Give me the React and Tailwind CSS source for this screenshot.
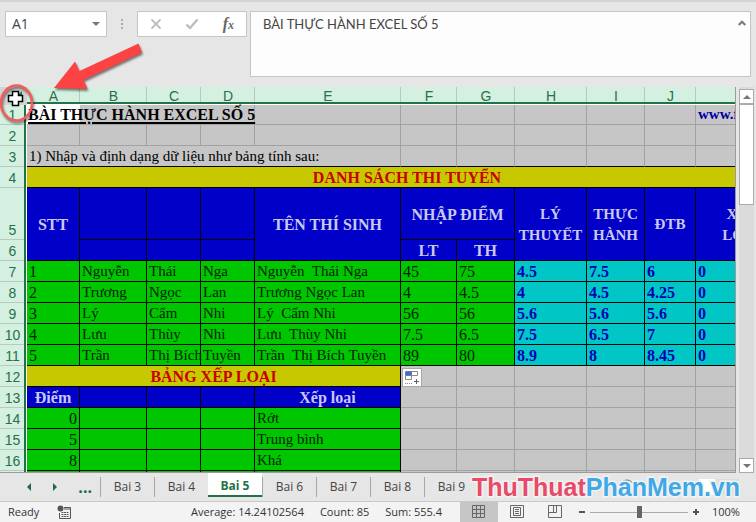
import React from 'react';
import clsx from 'clsx';

const UI_FONT = "font-['Open_Sans','Noto_Sans',sans-serif]";

const tones = {
  plain: 'bg-[#c6c6c6] border-[#a2a2a2] text-[15px] text-black',
  title: 'bg-[#c8c800] border-black text-[#c80000] font-bold text-center',
  head: 'bg-[#0000c8] border-black text-[#c9c9f2] font-bold text-center',
  name: 'bg-[#00c600] border-black text-[15px] text-[#002200]',
  mark: 'bg-[#00c600] border-black text-[#002200]',
  cyan: 'bg-[#00c6c6] border-black text-[#0000b4] font-bold',
};

const columns = [
  ['A', 'w-[53px]'],
  ['B', 'w-[67px]'],
  ['C', 'w-[54px]'],
  ['D', 'w-[54px]'],
  ['E', 'w-[146px]'],
  ['F', 'w-[56px]'],
  ['G', 'w-[58px]'],
  ['H', 'w-[72px]'],
  ['I', 'w-[58px]'],
  ['J', 'w-[51px]'],
  ['K', 'w-[92px]'],
];

const rowTones = ['mark', 'name', 'name', 'name', 'name', 'mark', 'mark', 'cyan', 'cyan', 'cyan', 'cyan'];

const students = [
  ['1', 'Nguyễn', 'Thái', 'Nga', 'Nguyễn  Thái Nga', '45', '75', '4.5', '7.5', '6', '0'],
  ['2', 'Trương', 'Ngọc', 'Lan', 'Trương Ngọc Lan', '4', '4.5', '4', '4.5', '4.25', '0'],
  ['3', 'Lý', 'Cẩm', 'Nhi', 'Lý  Cẩm Nhi', '56', '56', '5.6', '5.6', '5.6', '0'],
  ['4', 'Lưu', 'Thùy', 'Nhi', 'Lưu  Thùy Nhi', '7.5', '6.5', '7.5', '6.5', '7', '0'],
  ['5', 'Trần', 'Thị Bích', 'Tuyền', 'Trần  Thị Bích Tuyền', '89', '80', '8.9', '8', '8.45', '0'],
];

const grades = [
  [14, '0', 'Rớt'],
  [15, '5', 'Trung bình'],
  [16, '8', 'Khá'],
  [17, '', ''],
];

const Cell = ({ tone = 'plain', className, children, ...rest }) => (
  <td
    className={clsx('h-[21px] border-r border-b px-0.5 pt-px pb-0 leading-[19px] whitespace-pre', tones[tone], className)}
    {...rest}
  >
    {children}
  </td>
);

const Blank = ({ count, tone }) => Array.from({ length: count }, (_, i) => <Cell key={i} tone={tone} />);

// Heading that spans rows 5 and 6, one line of text per sheet row
const TallHead = ({ lines }) => (
  <Cell tone="head" rowSpan={2}>
    {lines.map((line) => <div key={line} className="text-[15px] leading-[21px]">{line}</div>)}
  </Cell>
);

const RowHead = ({ n }) => (
  <th
    scope="row"
    className="bg-[#d3f0e0] p-0 pr-0.5 align-bottom font-['Liberation_Sans',Arial,sans-serif] text-sm leading-5 font-normal text-[#2c6e4c] shadow-[inset_-1px_0_0_#fff,inset_-3px_0_0_#217346,inset_0_-1px_0_#bcc9c2]"
  >
    {n}
  </th>
);

const FormulaBar = () => (
  <div className={clsx('flex shrink-0 items-start border-t-2 border-[#d4d4d4] px-[5px] pt-[9px] pb-2.5 text-sm text-[#444]', UI_FONT)}>
    <div className="flex h-[26px] w-[102px] items-center border border-[#c6c6c6] bg-white">
      <input aria-label="Name Box" defaultValue="A1" className="min-w-0 flex-1 pl-1.5 outline-none" />
      <button aria-label="Open name list" className="px-1.5">
        <svg className="h-1 w-2" viewBox="0 0 8 4" fill="#777"><path d="M0 0h8L4 4z" /></svg>
      </button>
    </div>
    <svg className="mx-3 mt-2 h-3 w-1.5" viewBox="0 0 6 12" fill="#aaa">
      <path d="M2 0h2v2H2zM2 4h2v2H2zM2 8h2v2H2z" />
    </svg>
    <div className="flex h-[26px] w-[110px] items-center justify-between border border-[#c6c6c6] bg-white px-3">
      <button aria-label="Cancel">
        <svg className="h-3 w-3" viewBox="0 0 12 12" fill="none" stroke="#bdbdbd" strokeWidth="1.8"><path d="M1.5 1.5l9 9M10.5 1.5l-9 9" /></svg>
      </button>
      <button aria-label="Enter">
        <svg className="h-3 w-3.5" viewBox="0 0 14 12" fill="none" stroke="#bdbdbd" strokeWidth="2.4"><path d="M1.5 6.5L5 10 12.5 1.5" /></svg>
      </button>
      <button aria-label="Insert Function" className="font-['Liberation_Serif',serif] text-base leading-5 font-bold text-[#666] italic">
        f<sub className="bottom-0 text-xs">x</sub>
      </button>
    </div>
    <div className="ml-[3px] flex h-[66px] min-w-0 flex-1 border border-[#c3c7c3] bg-[#fdfdfd]">
      <textarea
        aria-label="Formula Bar"
        defaultValue="BÀI THỰC HÀNH EXCEL SỐ 5"
        className="min-w-0 flex-1 resize-none pt-0.5 pl-3 font-['Lato','Open_Sans',sans-serif] text-[13px] leading-5 outline-none"
      />
      <button aria-label="Collapse Formula Bar" className="self-start px-1 pt-2">
        <svg className="h-1.5 w-2" viewBox="0 0 8 6" fill="none" stroke="#777" strokeWidth="2"><path d="M.7 5L4 1.7 7.3 5" /></svg>
      </button>
    </div>
  </div>
);

const Sheet = () => (
  <div className="min-w-0 flex-1 overflow-hidden border-r border-b border-[#9b9b9b]">
    <table className="w-[788px] table-fixed border-separate border-spacing-0 font-['Liberation_Serif','Times_New_Roman',serif] text-base">
      <colgroup>
        <col className="w-[27px]" />
        {columns.map(([name, width]) => <col key={name} className={width} />)}
      </colgroup>
      <thead>
        <tr className="h-[18px] font-['Liberation_Sans',Arial,sans-serif] text-sm leading-4 text-[#2c6e4c]">
          <th aria-label="Select all" className="bg-[#cfd6d2] p-0">
            <svg className="h-[18px] w-full" viewBox="0 0 27 18"><path d="M22 4v11H11z" fill="#217346" /></svg>
          </th>
          {columns.map(([name]) => (
            <th
              key={name}
              scope="col"
              className="bg-[#d3f0e0] p-0 font-normal shadow-[inset_0_-1px_0_#fff,inset_0_-3px_0_#217346,inset_-1px_0_0_#b4cabe]"
            >
              {name === 'K' ? '' : name}
            </th>
          ))}
        </tr>
      </thead>
      <tbody>
        <tr>
          <RowHead n={1} />
          <td className="h-5 border-b border-[#a2a2a2] bg-white p-0 pl-px leading-[19px] font-bold whitespace-pre underline decoration-2 underline-offset-2">
            BÀI THỰC HÀNH EXCEL SỐ 5
          </td>
          <td className="border-b border-[#a2a2a2] bg-[#c6c6c6]" />
          <td className="border-b border-[#a2a2a2] bg-[#c6c6c6]" />
          {['D', 'E', 'F', 'G', 'H', 'I', 'J'].map((c) => (
            <td key={c} className="border-r border-b border-[#a2a2a2] bg-[#c6c6c6]" />
          ))}
          <td className="border-b border-[#a2a2a2] bg-[#c6c6c6] p-0 pl-0.5 text-[15px] leading-[19px] font-bold text-[#0000a8]">
            www.f
          </td>
        </tr>
        <tr>
          <RowHead n={2} />
          <Blank count={11} />
        </tr>
        <tr>
          <RowHead n={3} />
          <Cell colSpan={5} className="border-b-black">1) Nhập và định dạng dữ liệu như bảng tính sau:</Cell>
          {['F', 'G', 'H', 'I', 'J', 'K'].map((c) => <Cell key={c} className="border-b-black" />)}
        </tr>
        <tr>
          <RowHead n={4} />
          <Cell tone="title" colSpan={11}>DANH SÁCH THI TUYỂN</Cell>
        </tr>
        <tr className="h-[52px]">
          <RowHead n={5} />
          <Cell tone="head" rowSpan={2}>STT</Cell>
          <Blank count={3} tone="head" />
          <Cell tone="head" rowSpan={2}>TÊN THÍ SINH</Cell>
          <Cell tone="head" colSpan={2}>NHẬP ĐIỂM</Cell>
          <TallHead lines={['LÝ', 'THUYẾT']} />
          <TallHead lines={['THỰC', 'HÀNH']} />
          <TallHead lines={['ĐTB']} />
          <TallHead lines={['XẾP', 'LOẠI']} />
        </tr>
        <tr>
          <RowHead n={6} />
          <Blank count={3} tone="head" />
          <Cell tone="head">LT</Cell>
          <Cell tone="head">TH</Cell>
        </tr>
        {students.map((row, r) => (
          <tr key={row[0]}>
            <RowHead n={r + 7} />
            {row.map((value, c) => (
              <Cell key={c} tone={rowTones[c]}>{value}</Cell>
            ))}
          </tr>
        ))}
        <tr>
          <RowHead n={12} />
          <Cell tone="title" colSpan={5}>BẢNG XẾP LOẠI</Cell>
          <Cell className="relative">
            <button aria-label="Quick Analysis" className="absolute top-0.5 left-px h-[19px] w-5 border border-[#a8a8a8] bg-white">
              <svg className="h-full w-full" viewBox="0 0 18 17" fill="none" stroke="#8a8a8a">
                <path d="M2.5 2.5h12v4h-12zM2.5 6.5h6v4h-6zM8.5 2.5v4" />
                <path d="M3 3h5v3H3z" fill="#3b6fd0" stroke="#3b6fd0" />
                <path d="M2 14.5h8" strokeDasharray="1 1" />
                <path d="M11 12.5h5M13.5 10v5" stroke="#666" />
              </svg>
            </button>
          </Cell>
          <Blank count={5} />
        </tr>
        <tr>
          <RowHead n={13} />
          <Cell tone="head">Điểm</Cell>
          <Blank count={3} tone="head" />
          <Cell tone="head">Xếp loại</Cell>
          <Blank count={6} />
        </tr>
        {grades.map(([n, mark, grade]) => (
          <tr key={n}>
            <RowHead n={n} />
            <Cell tone="mark" className="text-right">{mark}</Cell>
            <Blank count={3} tone="mark" />
            <Cell tone="name">{grade}</Cell>
            <Blank count={6} />
          </tr>
        ))}
      </tbody>
    </table>
  </div>
);

const VerticalScroll = () => (
  <div className="mr-0.5 ml-[3px] flex w-[15px] shrink-0 flex-col bg-[#dbdbdb] pt-0.5">
    <button aria-label="Scroll up" className="flex h-[15px] items-center justify-center border border-[#ababab] bg-white">
      <svg className="h-1 w-2" viewBox="0 0 8 4" fill="#777"><path d="M0 4h8L4 0z" /></svg>
    </button>
    <div className="h-[101px] border border-[#ababab] bg-white" />
    <button aria-label="Scroll down" className="mt-auto flex h-[15px] items-center justify-center border border-[#ababab] bg-white">
      <svg className="h-1 w-2" viewBox="0 0 8 4" fill="#777"><path d="M0 0h8L4 4z" /></svg>
    </button>
  </div>
);

const tabs = ['Bai 3', 'Bai 4', 'Bai 5', 'Bai 6', 'Bai 7', 'Bai 8', 'Bai 9'];

const SheetTabs = () => (
  <div className={clsx('relative flex h-7 shrink-0 items-stretch bg-[#e6e6e6] text-xs text-[#444]', UI_FONT)}>
    <div className="flex w-[100px] items-center justify-between pr-2 pl-[27px] text-[#1e6b43]">
      <button aria-label="Previous sheet">
        <svg className="h-2 w-1" viewBox="0 0 4 8" fill="currentColor"><path d="M4 0v8L0 4z" /></svg>
      </button>
      <button aria-label="Next sheet">
        <svg className="h-2 w-1" viewBox="0 0 4 8" fill="currentColor"><path d="M0 0v8l4-4z" /></svg>
      </button>
      <button className="text-base leading-4 font-bold">...</button>
    </div>
    {tabs.map((tab) => (
      <button
        key={tab}
        className={
          tab === 'Bai 5'
            ? 'mb-1 w-[54px] border-b-2 border-[#217346] bg-white pt-1 font-bold text-[#217346]'
            : 'my-1 w-[54px] border-l border-[#a8a8a8]'
        }
      >
        {tab}
      </button>
    ))}
    <button aria-label="New sheet" className="ml-auto">
      <svg className="h-4 w-4" viewBox="0 0 16 16" fill="none" stroke="#777"><circle cx="8" cy="8" r="7" /><path d="M8 4.5v7M4.5 8h7" /></svg>
    </button>
    <div className="my-1.5 mr-[17px] ml-16 flex w-10 bg-[#dedede]">
      <div className="w-4 bg-white" />
    </div>
    <div className="absolute -top-1 right-4 font-['Liberation_Sans_Narrow','Liberation_Sans',sans-serif] text-[25px] leading-9 font-bold whitespace-nowrap [paint-order:stroke_fill] [-webkit-text-stroke:3px_#f3f3f3]">
      <span className="text-[#e84a67]">ThuThuat</span>
      <span className="text-[#3fa9e8]">PhanMem.vn</span>
    </div>
  </div>
);

const StatusBar = () => (
  <div className={clsx('flex h-[21px] shrink-0 items-center border-t border-[#c9c9c9] bg-[#f3f3f3] text-[11px] text-[#333]', UI_FONT)}>
    <span className="pl-2">Ready</span>
    <button aria-label="Record macro" className="ml-[18px]">
      <svg className="h-3.5 w-3.5" viewBox="0 0 14 14" fill="none" stroke="#555">
        <path d="M7 2.5h6.5v11h-11V8M7 4h6.5" />
        <path d="M4.5 7.5h7M4.5 9.5h7M4.5 11.5h7" strokeDasharray="2 .6" />
        <circle cx="3.5" cy="3.5" r="3" fill="#555" stroke="none" />
      </svg>
    </button>
    <div className="ml-auto flex gap-4 pr-[18px]">
      <span>Average: 14.24102564</span>
      <span>Count: 85</span>
      <span>Sum: 555.4</span>
    </div>
    <button aria-label="Normal view" className="flex h-full w-[38px] items-center justify-center bg-[#c6c6c6]">
      <svg className="h-3.5 w-3.5" viewBox="0 0 14 14" fill="none" stroke="#666"><path d="M.5 .5h12v12H.5zM4.5 .5v12M8.5 .5v12M.5 4.5h12M.5 8.5h12" /></svg>
    </button>
    <button aria-label="Page layout" className="flex w-[38px] items-center justify-center">
      <svg className="h-3.5 w-3.5" viewBox="0 0 14 14" fill="none" stroke="#666"><path d="M.5 .5h13v12H.5zM3.5 2.5h7v8h-7zM5 4.5h4M5 6.5h4M5 8.5h4" /></svg>
    </button>
    <button aria-label="Page break preview" className="flex w-[38px] items-center justify-center">
      <svg className="h-3.5 w-3.5" viewBox="0 0 14 14" fill="none" stroke="#666"><path d="M.5 .5h13v12H.5zM.5 7.5h8v-7M5.5 .5v7" /></svg>
    </button>
    <button aria-label="Zoom out" className="ml-0.5 p-0.5">
      <svg className="h-2 w-2" viewBox="0 0 8 8" fill="#555"><path d="M1 3h6v2H1z" /></svg>
    </button>
    <input
      type="range"
      aria-label="Zoom"
      className="mx-0.5 h-3.5 w-[98px] appearance-none bg-transparent bg-[linear-gradient(#aaa,#aaa)] bg-[length:100%_1px] bg-center bg-no-repeat [&::-webkit-slider-thumb]:h-3 [&::-webkit-slider-thumb]:w-[5px] [&::-webkit-slider-thumb]:appearance-none [&::-webkit-slider-thumb]:bg-[#666]"
    />
    <button aria-label="Zoom in" className="p-0.5">
      <svg className="h-2 w-2" viewBox="0 0 8 8" fill="#555"><path d="M1 3h2V1h2v2h2v2H5v2H3V5H1z" /></svg>
    </button>
    <span className="w-[54px] pl-2.5">100%</span>
  </div>
);

// Red arrow, ring and cross pointer drawn over the sheet
const Annotation = () => (
  <svg className="pointer-events-none absolute top-0 left-0 h-[130px] w-[160px] overflow-visible" viewBox="0 0 160 130">
    <g className="drop-shadow-[1px_2px_1px_rgba(0,0,0,0.5)]">
      <path d="M54 88L75 61.5L79.5 71L138.5 43.5L142 52.5L83.5 80L87.5 89Z" fill="#fb4343" />
      <ellipse cx="16.5" cy="103" rx="15.5" ry="17.5" fill="none" stroke="#f65a5a" strokeWidth="2.5" />
    </g>
    <path d="M12.5 91.5h6v4h4v6h-4v4h-6v-4h-4v-6h4z" fill="#fff" stroke="#000" strokeWidth="1.5" />
  </svg>
);

const App = () => (
  <div className="relative flex h-screen flex-col overflow-hidden bg-[#e6e6e6]">
    <FormulaBar />
    <div className="flex min-h-0 flex-1">
      <Sheet />
      <VerticalScroll />
    </div>
    <SheetTabs />
    <StatusBar />
    <Annotation />
  </div>
);

export default App;
